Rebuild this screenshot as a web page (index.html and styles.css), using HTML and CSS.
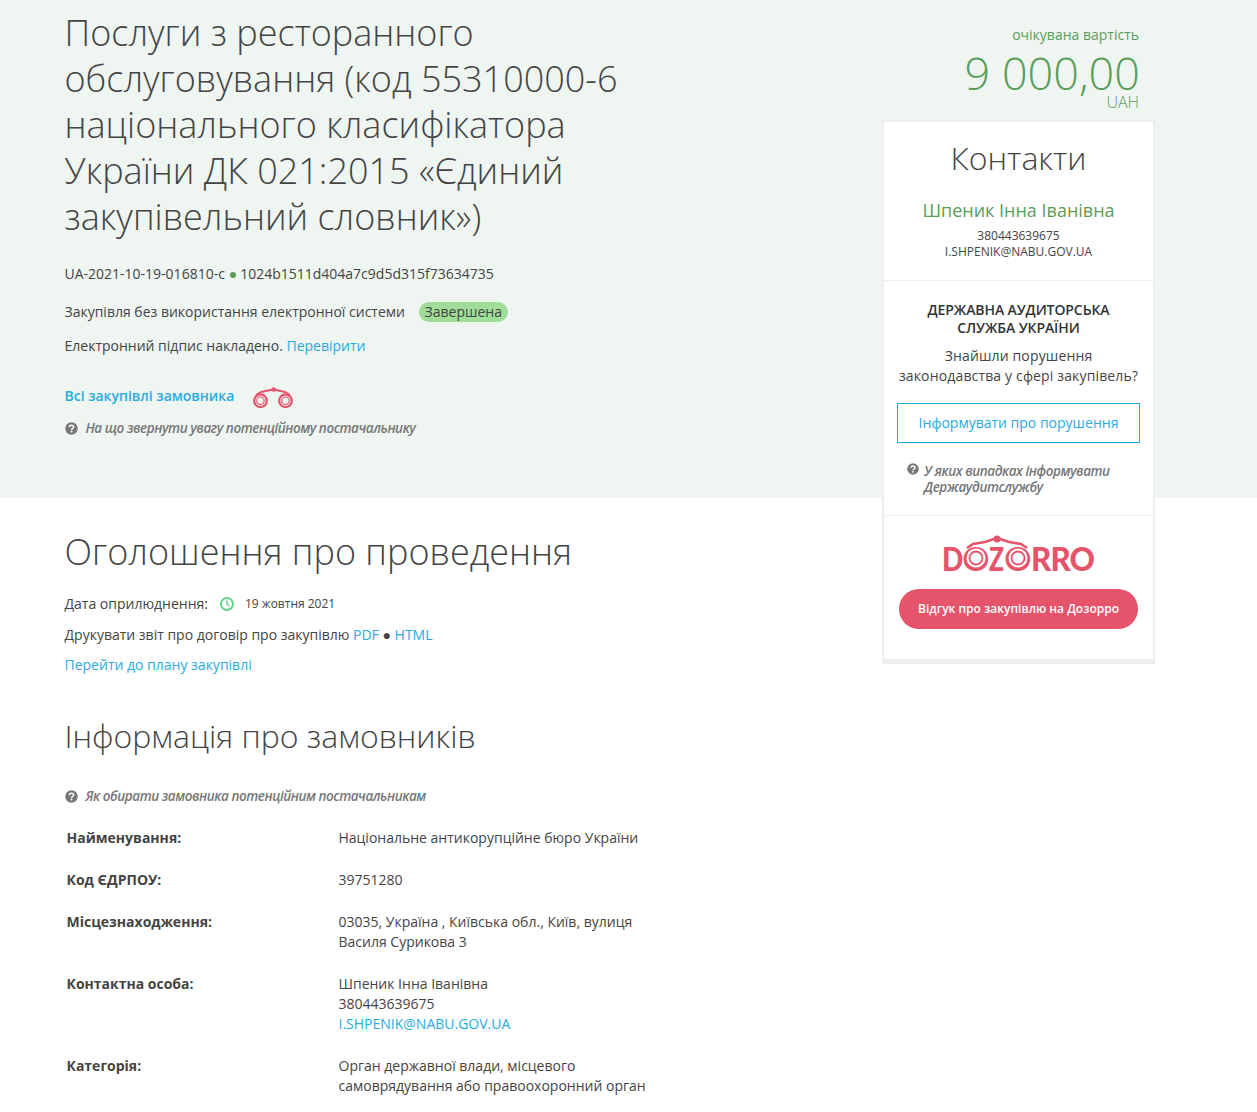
FILE: index.html
```html
<!DOCTYPE html>
<html lang="uk">
<head>
    <meta charset="UTF-8">
    <meta name="viewport" content="width=device-width, initial-scale=1.0">
    <title>Послуги з ресторанного обслуговування</title>
    <link rel="stylesheet" href="styles.css">
</head>
<body>

<svg class="defs" width="0" height="0">
    <symbol id="question" viewBox="0 0 14 14">
        <circle cx="7" cy="7" r="6.7" fill="#777"/>
        <path d="M4.7 5.500c.1-1.300 1-2 2.300-2 1.300 0 2.300.8 2.300 1.900 0 1.700-2.300 1.500-2.300 3.200" fill="none" stroke="#fff" stroke-width="1.600"/>
        <rect x="6.100" y="9.400" width="1.800" height="1.800" fill="#fff"/>
    </symbol>
</svg>

<div class="page">
    <main class="content">
        <h1 class="title">Послуги з ресторанного обслуговування (код 55310000-6 національного класифікатора України ДК 021:2015 «Єдиний закупівельний словник»)</h1>

        <p class="ids">UA-2021-10-19-016810-c <span class="dot"></span> 1024b1511d404a7c9d5d315f73634735</p>
        <p class="status-row">Закупівля без використання електронної системи <span class="pill">Завершена</span></p>
        <p class="sign-row">Електронний підпис накладено. <a href="#">Перевірити</a></p>

        <p class="buyer-row">
            <a href="#" class="strong-link">Всі закупівлі замовника</a>
            <svg class="binoculars" width="41" height="21" viewBox="0 0 41 21">
                <g fill="none" stroke="#e5546a">
                    <circle cx="7.500" cy="13.700" r="6.300" stroke-width="2.200"/>
                    <circle cx="7.500" cy="13.700" r="3.700" stroke-width="1.200"/>
                    <circle cx="32.500" cy="13.700" r="6.300" stroke-width="2.200"/>
                    <circle cx="32.500" cy="13.700" r="3.700" stroke-width="1.200"/>
                    <path d="M3 8l5-3 12-2.500M37 8l-5-3-11-2.500" stroke-width="2"/>
                </g>
                <circle cx="20.700" cy="2.500" r="2.300" fill="#e5546a"/>
            </svg>
        </p>
        <p class="hint"><svg class="q" width="13" height="13"><use href="#question"/></svg><em>На що звернути увагу потенційному постачальнику</em></p>

        <h2 class="notice-title">Оголошення про проведення</h2>
        <p class="date-row">Дата оприлюднення:
            <svg class="clock" width="14" height="14" viewBox="0 0 14 14">
                <circle cx="7" cy="7" r="6" fill="none" stroke="#5fd68b" stroke-width="2"/>
                <path d="M7 3.500v3.800l2.400 1.500" fill="none" stroke="#5fd68b" stroke-width="1.500"/>
            </svg>
            <span class="date">19 жовтня 2021</span>
        </p>
        <p class="print-row">Друкувати звіт про договір про закупівлю <a href="#">PDF</a> ● <a href="#">HTML</a></p>
        <p class="plan-row"><a href="#">Перейти до плану закупівлі</a></p>

        <h2 class="buyer-title">Інформація про замовників</h2>
        <p class="hint hint-buyer"><svg class="q" width="13" height="13"><use href="#question"/></svg><em>Як обирати замовника потенційним постачальникам</em></p>

        <dl class="info">
            <dt>Найменування:</dt>
            <dd>Національне антикорупційне бюро України</dd>
            <dt>Код ЄДРПОУ:</dt>
            <dd>39751280</dd>
            <dt>Місцезнаходження:</dt>
            <dd>03035, Україна , Київська обл., Київ, вулиця Василя Сурикова 3</dd>
            <dt>Контактна особа:</dt>
            <dd>Шпеник Інна Іванівна<br>380443639675<br><a href="#">I.SHPENIK@NABU.GOV.UA</a></dd>
            <dt>Категорія:</dt>
            <dd>Орган державної влади, місцевого самоврядування або правоохоронний орган</dd>
        </dl>
    </main>

    <aside class="side">
        <div class="price">
            <div class="price-label">очікувана вартість</div>
            <div class="price-value">9 000,00</div>
            <div class="price-cur">UAH</div>
        </div>

        <div class="card">
            <section class="card-part contacts">
                <h3 class="contacts-title">Контакти</h3>
                <div class="contact-name">Шпеник Інна Іванівна</div>
                <div class="contact-line">380443639675<br>I.SHPENIK@NABU.GOV.UA</div>
            </section>

            <section class="card-part audit">
                <h4 class="audit-title">ДЕРЖАВНА АУДИТОРСЬКА СЛУЖБА УКРАЇНИ</h4>
                <p class="audit-text">Знайшли порушення законодавства у сфері закупівель?</p>
                <a href="#" class="outline-btn">Інформувати про порушення</a>
                <p class="hint hint-audit"><svg class="q" width="12" height="12"><use href="#question"/></svg><em>У яких випадках інформувати Держаудитслужбу</em></p>
            </section>

            <section class="card-part dozorro">
                <div class="logo">
                    <span class="l-d">D</span><span class="lens">O</span><span class="l-z">Z</span><span class="lens">O</span><span class="l-r">RRO</span>
                    <svg class="logo-art" width="84" height="40" viewBox="0 0 84 40">
                        <path d="M8 13l6-4 12-2 12-4M68 13l-6-4-12-2-12-4" fill="none" stroke="#e5546a" stroke-width="2.500"/>
                        <circle cx="17" cy="23" r="9.500" fill="#fff"/>
                        <circle cx="59" cy="23" r="9.500" fill="#fff"/>
                        <circle cx="17" cy="23" r="6.500" fill="none" stroke="#e5546a" stroke-width="1.800"/>
                        <circle cx="59" cy="23" r="6.500" fill="none" stroke="#e5546a" stroke-width="1.800"/>
                        <circle cx="38" cy="4" r="3.500" fill="#e5546a"/>
                    </svg>
                </div>
                <a href="#" class="red-btn">Відгук про закупівлю на Дозорро</a>
            </section>
        </div>
    </aside>
</div>

</body>
</html>
```

FILE: styles.css
```css
* {
    box-sizing: border-box;
}
body {
    margin: 0;
    font-family: "Open Sans", sans-serif;
    font-size: 14px;
    line-height: 20px;
    color: #444;
    background: #fff;
}
a {
    color: #29abe2;
    text-decoration: none;
}
p {
    margin: 0;
}
.defs {
    position: absolute;
}
.page {
    display: grid;
    grid-template-columns: 882px 273px;
    height: 1112px;
    overflow: hidden;
    background: linear-gradient(#eff5f1 498px, #fff 498px);
}

/* left column */
.content {
    padding: 10px 0 0 64.5px;
}
.title {
    width: 570px;
    margin: 0;
    font-size: 36px;
    line-height: 46px;
    font-weight: 300;
}
.ids {
    margin-top: 24px;
}
.dot {
    display: inline-block;
    width: 6px;
    height: 6px;
    margin: 0 1px 1px;
    border-radius: 50%;
    background: #5a9e5a;
}
.status-row {
    margin-top: 18px;
}
.pill {
    display: inline-block;
    height: 20px;
    margin-left: 10px;
    padding: 0 6px;
    border-radius: 10px;
    background: #a0dd98;
}
.sign-row {
    margin-top: 14px;
}
.buyer-row {
    display: flex;
    align-items: center;
    gap: 18.5px;
    height: 26px;
    margin-top: 27px;
}
.strong-link {
    font-weight: 600;
}
.binoculars {
    margin-top: 2px;
}
.hint {
    display: flex;
    align-items: center;
    gap: 8px;
    margin-top: 9px;
    color: #777;
}
.hint em {
    font-size: 13.5px;
    font-weight: 600;
    letter-spacing: -0.45px;
}
.q {
    flex: none;
}
.notice-title {
    margin: 91px 0 0;
    font-size: 36px;
    line-height: 46px;
    font-weight: 300;
}
.date-row {
    display: flex;
    align-items: center;
    margin-top: 19px;
}
.clock {
    margin-left: 12px;
}
.date {
    margin-left: 11px;
    font-size: 12px;
}
.print-row {
    margin-top: 11px;
}
.plan-row {
    margin-top: 10px;
}
.buyer-title {
    margin: 38px 0 0;
    font-size: 32px;
    line-height: 46px;
    font-weight: 300;
}
.hint-buyer {
    margin-top: 27px;
}
.info {
    display: grid;
    grid-template-columns: 272px 320px;
    margin: 11px 0 0 2px;
}
.info dt {
    padding: 11px 0;
    font-weight: 700;
}
.info dd {
    margin: 0;
    padding: 11px 0;
}

/* right column */
.price {
    height: 120px;
    padding: 25px 16px 0 0;
    text-align: right;
    color: #5a9e5a;
}
.price-value {
    margin: 6px -1px 0 0;
    font-size: 45px;
    line-height: 44px;
    font-weight: 300;
}
.price-cur {
    font-size: 16px;
    line-height: 14px;
    font-weight: 300;
}
.card {
    height: 544px;
    background: #fff;
    border: 2px solid #eee;
    border-bottom-width: 5px;
    text-align: center;
}
.card-part {
    padding: 0 15px;
    border-bottom: 1px solid #eee;
}
.contacts {
    height: 159px;
    padding-top: 13px;
}
.contacts-title {
    margin: 0;
    font-size: 32px;
    line-height: 46px;
    font-weight: 300;
}
.contact-name {
    margin-top: 16px;
    font-size: 18px;
    line-height: 26px;
    color: #5a9e5a;
}
.contact-line {
    margin-top: 5px;
    font-size: 12px;
    line-height: 16px;
}
.audit {
    height: 235px;
    padding-top: 20px;
}
.audit-title {
    margin: 0;
    font-size: 14px;
    line-height: 18px;
    font-weight: 600;
    letter-spacing: -0.1px;
    color: #333;
}
.audit-text {
    margin: 9px -4px 0;
    letter-spacing: 0.15px;
}
.outline-btn {
    display: block;
    height: 40px;
    margin: 17px -2px 0;
    border: 1px solid #29abe2;
    line-height: 38px;
}
.hint-audit {
    align-items: flex-start;
    gap: 5px;
    margin: 20px 0 0 8px;
    line-height: 16px;
    text-align: left;
}
.dozorro {
    padding-top: 20px;
    border-bottom: 0;
}
.logo {
    position: relative;
    display: flex;
    justify-content: center;
    height: 40px;
    padding-top: 6px;
    font-family: "Lato", sans-serif;
    font-size: 33px;
    line-height: 32px;
    font-weight: 900;
    color: #e5546a;
}
.l-d {
    width: 21px;
    transform: scaleX(0.85);
    transform-origin: left;
}
.lens {
    width: 26px;
    text-align: center;
}
.l-z {
    width: 16px;
    transform: scaleX(0.75);
    transform-origin: left;
}
.l-r {
    width: 65px;
    letter-spacing: -1px;
    white-space: nowrap;
    transform: scaleX(0.95);
    transform-origin: left;
}
.logo-art {
    position: absolute;
    left: 59.5px;
    top: -1px;
}
.red-btn {
    display: block;
    height: 40px;
    margin-top: 13px;
    border-radius: 20px;
    background: #e5546a;
    color: #fff;
    font-size: 12px;
    font-weight: 600;
    line-height: 40px;
}
```
